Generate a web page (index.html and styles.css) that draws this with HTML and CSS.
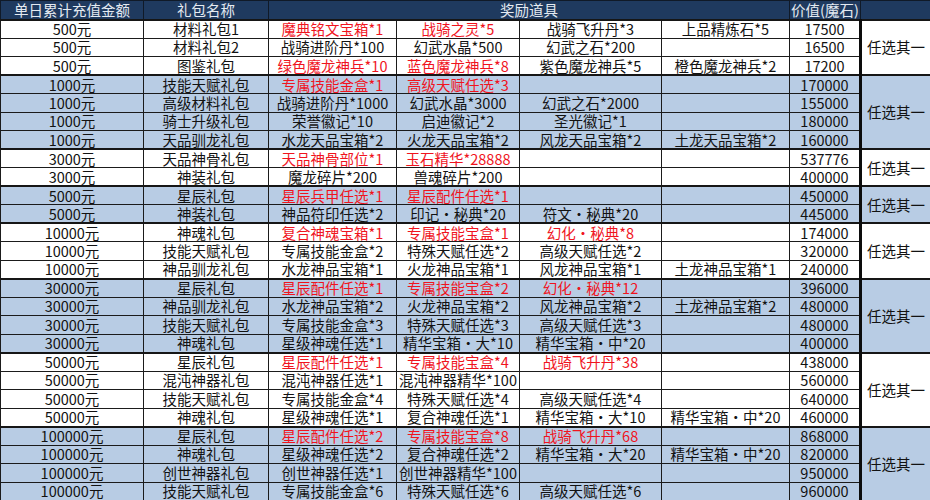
FILE: index.html
```html
<!DOCTYPE html>
<html lang="zh-CN">
<head>
<meta charset="utf-8">
<title>单日累计充值</title>
<link rel="stylesheet" href="styles.css">
</head>
<body>
<table class="sheet">
<colgroup>
<col class="c1"><col class="c2"><col class="c3"><col class="c4"><col class="c5"><col class="c6"><col class="c7"><col class="c8">
</colgroup>
<thead>
<tr class="head">
<th>单日累计充值金额</th><th>礼包名称</th><th colspan="4">奖励道具</th><th class="val">价值(魔石)</th><th class="hpick"></th>
</tr>
</thead>
<tbody>
<tr class="w g"><td>500元</td><td>材料礼包1</td><td class="r">魔典铭文宝箱*1</td><td class="r">战骑之灵*5</td><td>战骑飞升丹*3</td><td>上品精炼石*5</td><td>17500</td><td class="pick" rowspan="3">任选其一</td></tr>
<tr class="w"><td>500元</td><td>材料礼包2</td><td>战骑进阶丹*100</td><td>幻武水晶*500</td><td>幻武之石*200</td><td></td><td>16500</td></tr>
<tr class="w"><td>500元</td><td>图鉴礼包</td><td class="r">绿色魔龙神兵*10</td><td class="r">蓝色魔龙神兵*8</td><td>紫色魔龙神兵*5</td><td>橙色魔龙神兵*2</td><td>17200</td></tr>

<tr class="b g"><td>1000元</td><td>技能天赋礼包</td><td class="r">专属技能金盒*1</td><td class="r">高级天赋任选*3</td><td></td><td></td><td>170000</td><td class="pick" rowspan="4">任选其一</td></tr>
<tr class="b"><td>1000元</td><td>高级材料礼包</td><td>战骑进阶丹*1000</td><td>幻武水晶*3000</td><td>幻武之石*2000</td><td></td><td>155000</td></tr>
<tr class="b"><td>1000元</td><td>骑士升级礼包</td><td>荣誉徽记*10</td><td>启迪徽记*2</td><td>圣光徽记*1</td><td></td><td>180000</td></tr>
<tr class="b"><td>1000元</td><td>天品驯龙礼包</td><td>水龙天品宝箱*2</td><td>火龙天品宝箱*2</td><td>风龙天品宝箱*2</td><td>土龙天品宝箱*2</td><td>160000</td></tr>

<tr class="w g"><td>3000元</td><td>天品神骨礼包</td><td class="r">天品神骨部位*1</td><td class="r">玉石精华*28888</td><td></td><td></td><td>537776</td><td class="pick" rowspan="2">任选其一</td></tr>
<tr class="w"><td>3000元</td><td>神装礼包</td><td>魔龙碎片*200</td><td>兽魂碎片*200</td><td></td><td></td><td>400000</td></tr>

<tr class="b g"><td>5000元</td><td>星辰礼包</td><td class="r">星辰兵甲任选*1</td><td class="r">星辰配件任选*1</td><td></td><td></td><td>450000</td><td class="pick" rowspan="2">任选其一</td></tr>
<tr class="b"><td>5000元</td><td>神装礼包</td><td>神品符印任选*2</td><td>印记・秘典*20</td><td>符文・秘典*20</td><td></td><td>445000</td></tr>

<tr class="w g"><td>10000元</td><td>神魂礼包</td><td class="r">复合神魂宝箱*1</td><td class="r">专属技能宝盒*1</td><td class="r">幻化・秘典*8</td><td></td><td>174000</td><td class="pick" rowspan="3">任选其一</td></tr>
<tr class="w"><td>10000元</td><td>技能天赋礼包</td><td>专属技能金盒*2</td><td>特殊天赋任选*2</td><td>高级天赋任选*2</td><td></td><td>320000</td></tr>
<tr class="w"><td>10000元</td><td>神品驯龙礼包</td><td>水龙神品宝箱*1</td><td>火龙神品宝箱*1</td><td>风龙神品宝箱*1</td><td>土龙神品宝箱*1</td><td>240000</td></tr>

<tr class="b g"><td>30000元</td><td>星辰礼包</td><td class="r">星辰配件任选*1</td><td class="r">专属技能宝盒*2</td><td class="r">幻化・秘典*12</td><td></td><td>396000</td><td class="pick" rowspan="4">任选其一</td></tr>
<tr class="b"><td>30000元</td><td>神品驯龙礼包</td><td>水龙神品宝箱*2</td><td>火龙神品宝箱*2</td><td>风龙神品宝箱*2</td><td>土龙神品宝箱*2</td><td>480000</td></tr>
<tr class="b"><td>30000元</td><td>技能天赋礼包</td><td>专属技能金盒*3</td><td>特殊天赋任选*3</td><td>高级天赋任选*3</td><td></td><td>480000</td></tr>
<tr class="b"><td>30000元</td><td>神魂礼包</td><td>星级神魂任选*1</td><td>精华宝箱・大*10</td><td>精华宝箱・中*20</td><td></td><td>400000</td></tr>

<tr class="w g"><td>50000元</td><td>星辰礼包</td><td class="r">星辰配件任选*1</td><td class="r">专属技能宝盒*4</td><td class="r">战骑飞升丹*38</td><td></td><td>438000</td><td class="pick" rowspan="4">任选其一</td></tr>
<tr class="w"><td>50000元</td><td>混沌神器礼包</td><td>混沌神器任选*1</td><td>混沌神器精华*100</td><td></td><td></td><td>560000</td></tr>
<tr class="w"><td>50000元</td><td>技能天赋礼包</td><td>专属技能金盒*4</td><td>特殊天赋任选*4</td><td>高级天赋任选*4</td><td></td><td>640000</td></tr>
<tr class="w"><td>50000元</td><td>神魂礼包</td><td>星级神魂任选*1</td><td>复合神魂任选*1</td><td>精华宝箱・大*10</td><td>精华宝箱・中*20</td><td>460000</td></tr>

<tr class="b g"><td>100000元</td><td>星辰礼包</td><td class="r">星辰配件任选*2</td><td class="r">专属技能宝盒*8</td><td class="r">战骑飞升丹*68</td><td></td><td>868000</td><td class="pick" rowspan="4">任选其一</td></tr>
<tr class="b"><td>100000元</td><td>神魂礼包</td><td>星级神魂任选*2</td><td>复合神魂任选*2</td><td>精华宝箱・大*20</td><td>精华宝箱・中*20</td><td>820000</td></tr>
<tr class="b"><td>100000元</td><td>创世神器礼包</td><td>创世神器任选*1</td><td>创世神器精华*100</td><td></td><td></td><td>950000</td></tr>
<tr class="b"><td>100000元</td><td>技能天赋礼包</td><td>专属技能金盒*6</td><td>特殊天赋任选*6</td><td>高级天赋任选*6</td><td></td><td>960000</td></tr>
</tbody>
</table>
</body>
</html>
```
FILE: styles.css
```css
html, body {
  margin: 0;
  padding: 0;
  background: #ffffff;
}

.sheet {
  width: 930px;
  table-layout: fixed;
  border-collapse: collapse;
  font-family: "Noto Sans CJK SC", "Noto Sans", sans-serif;
  font-size: 14.5px;
  color: #121212;
}

.c1 { width: 143px; }
.c2 { width: 125px; }
.c3 { width: 128px; }
.c4 { width: 123px; }
.c5 { width: 142px; }
.c6 { width: 128px; }
.c7 { width: 71px; }
.c8 { width: 70px; }

.sheet th,
.sheet td {
  padding: 0;
  line-height: 16px;
  text-align: center;
  vertical-align: middle;
  white-space: nowrap;
  overflow: visible;
  border: 1px solid #1b1b1b;
}

.head {
  height: 19px;
  background: #1f3a5f;
}

.head th {
  color: #e4eaf1;
  font-weight: normal;
  border-color: #101a28;
}

.head .hpick {
  border-left: 1px solid #1f3a5f;
}

.sheet tbody tr {
  height: 18.5px;
}

.w { background: #ffffff; }
.b { background: #b8cce4; }

.g td {
  border-top: 2px solid #161616;
}

.sheet td.r {
  color: #f0141e;
}

.sheet td.pick {
  border-left: 3px solid #0c0c0c;
}
```
